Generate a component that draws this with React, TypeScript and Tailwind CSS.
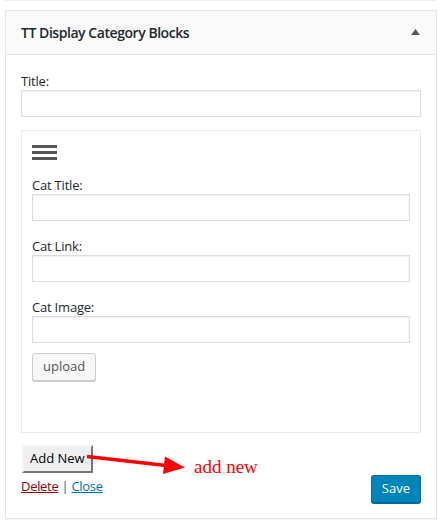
import React from "react"

const font = "font-['Open_Sans',sans-serif]"

function Field({ label }: { label: string }) {
  return (
    <div className="flex flex-col">
      <label className="h-[18px] text-[13px] leading-[18px] tracking-[-0.2px] text-[#23282d]">{label}</label>
      <input
        type="text"
        className="h-[27px] w-full border border-[#dddddd] bg-white shadow-[inset_0_1px_2px_rgba(0,0,0,0.07)] outline-none"
      />
    </div>
  )
}

export default function App() {
  return (
    <div className={`relative h-[525px] w-[445px] bg-white ${font}`}>
      <div className="ml-[5px] h-px w-[432px] bg-[#efefef]" />

      <div className="ml-[5px] mt-[9px] w-[432px] border border-[#e5e5e5] bg-white shadow-[0_1px_1px_rgba(0,0,0,0.04)]">
        <div className="flex h-[44px] items-center justify-between border-b border-[#e5e5e5] bg-[#fafafa] pl-[15px] pr-[16px]">
          <h3 className="text-[14px] font-semibold tracking-[-0.45px] text-[#23282d]">TT Display Category Blocks</h3>
          <svg width="9" height="6" viewBox="0 0 9 6" className="-mt-[1px]">
            <polygon points="4.5,0 9,6 0,6" fill="#555d66" />
          </svg>
        </div>

        <div className="px-[15px] pb-[15px] pt-[17px]">
          <Field label="Title:" />

          <div className="mt-[13px] border border-[#e9e9e9] px-[10px] pb-[51px] pt-[14px]">
            <div className="flex w-[25px] flex-col gap-[3px]">
              <span className="h-[3px] bg-[#555555]" />
              <span className="h-[3px] bg-[#555555]" />
              <span className="h-[3px] bg-[#555555]" />
            </div>

            <div className="mt-[16px] flex flex-col gap-[16px]">
              <Field label="Cat Title:" />
              <Field label="Cat Link:" />
              <Field label="Cat Image:" />
            </div>

            <button className="mt-[10px] h-[28px] rounded-[3px] border border-[#cccccc] bg-[#f7f7f7] px-[10px] text-[13px] text-[#555555] shadow-[0_1px_0_#cccccc]">
              upload
            </button>
          </div>

          <button className="mt-[12px] ml-px h-[28px] border-2 border-t-[#f4f4f4] border-l-[#f4f4f4] border-r-[#767676] border-b-[#767676] bg-[#efefef] px-[6px] text-[13px] text-black">
            Add New
          </button>

          <div className="mt-[2px] flex items-start justify-between">
            <div className="mt-[1px] text-[13px] leading-[20px] tracking-[-0.3px] text-[#555555]">
              <a className="text-[#a00000] underline">Delete</a> | <a className="text-[#0073aa] underline">Close</a>
            </div>
            <button className="h-[28px] rounded-[3px] border border-[#0073aa] border-b-[#006799] bg-[#0085ba] px-[10px] text-[13px] text-white shadow-[0_1px_0_#006799]">
              Save
            </button>
          </div>
        </div>
      </div>

      <svg className="pointer-events-none absolute left-0 top-0" width="445" height="525">
        <line x1="87" y1="456.5" x2="166" y2="465.5" stroke="#ff0000" strokeWidth="3.5" />
        <polygon points="165,456.5 185,467.5 163,474" fill="#ff0000" />
      </svg>
      <span className="absolute left-[194px] top-[455px] font-['Liberation_Serif',serif] text-[19px] leading-[24px] text-[#ff0000]">
        add new
      </span>
    </div>
  )
}
